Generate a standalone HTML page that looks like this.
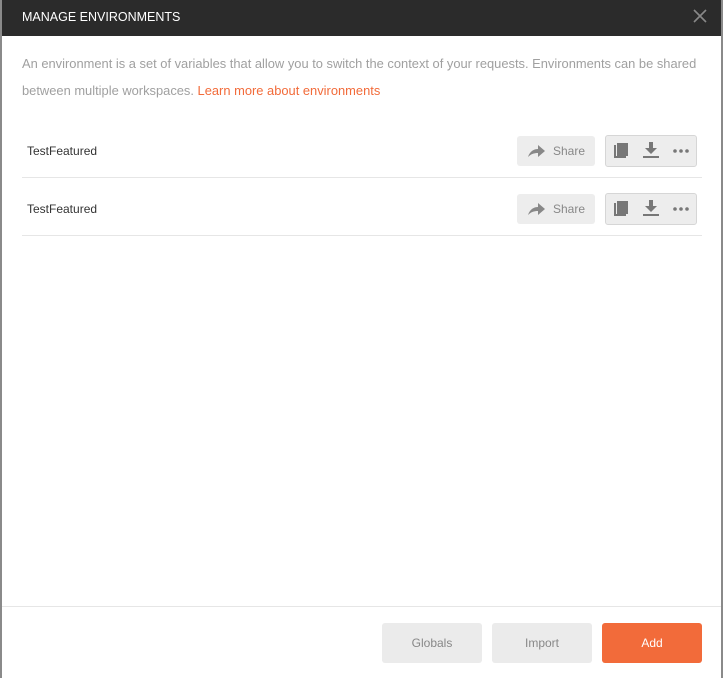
<!DOCTYPE html>
<html><head><style>
*{margin:0;padding:0;box-sizing:border-box}
body{width:723px;height:678px;overflow:hidden;background:#fff;font-family:"Liberation Sans",sans-serif;position:relative}
.ls{position:absolute;left:0;top:0;width:2px;height:678px;background:#8a8a8a}
.rs{position:absolute;right:0;top:0;width:2px;height:678px;background:#8a8a8a}
.hd{position:absolute;left:2px;top:0;right:2px;height:36px;background:#2b2b2b;color:#fff;font-size:12.5px;line-height:34px;padding-left:20px}
.x{position:absolute;right:14px;top:9px}
.desc{position:absolute;left:22px;top:50px;width:690px;font-size:12.9px;color:#a0a0a0;line-height:27px;white-space:nowrap}
.desc a{color:#f26b3a;text-decoration:none}
.row{position:absolute;left:22px;width:680px;height:58px;border-bottom:1px solid #e6e6e6}
.nm{position:absolute;left:5px;top:2px;line-height:58px;font-size:12px;color:#333}
.sh{position:absolute;left:495px;top:16px;width:78px;height:30px;background:#ededed;border-radius:3px;color:#888;font-size:12px;line-height:30px;padding-left:36px}
.sh svg{position:absolute;left:11px;top:9px}
.grp{position:absolute;left:583px;top:15px;width:92px;height:32px;background:#ededed;border:1px solid #d6d6d6;border-radius:3px}
.ft{position:absolute;left:2px;right:2px;top:606px;border-top:1px solid #e6e6e6}
.b{position:absolute;top:623px;width:100px;height:40px;border-radius:3px;font-size:12px;line-height:40px;text-align:center;background:#ebebeb;color:#888}
</style></head><body>
<div class="ls"></div><div class="rs"></div>
<div class="hd">MANAGE ENVIRONMENTS
<svg class="x" width="14" height="14" viewBox="0 0 14 14"><path d="M1 1L13 13M13 1L1 13" stroke="#888" stroke-width="1.6"/></svg></div>
<div class="desc">An environment is a set of variables that allow you to switch the context of your requests. Environments can be shared<br>between multiple workspaces. <a>Learn more about environments</a></div>
<div class="row" style="top:120px"><div class="nm">TestFeatured</div>
<div class="sh"><svg width="17" height="12" viewBox="0 0 17 12"><path d="M0 12C2 6 6 4 10 4V0L17 6L10 12V8C6 8 3 9 0 12Z" fill="#888"/></svg>Share</div>
<div class="grp"><svg width="92" height="30" viewBox="0 0 92 30"><path d="M8 9h2v11h10v2H8z" fill="#777"/><rect x="11" y="7" width="11" height="13" fill="#777"/><path d="M43 6h4v6h4l-6 6-6-6h4z" fill="#777"/><rect x="37" y="20" width="16" height="2" fill="#777"/><circle cx="69" cy="15" r="1.8" fill="#777"/><circle cx="75" cy="15" r="1.8" fill="#777"/><circle cx="81" cy="15" r="1.8" fill="#777"/></svg></div></div>
<div class="row" style="top:178px"><div class="nm">TestFeatured</div>
<div class="sh"><svg width="17" height="12" viewBox="0 0 17 12"><path d="M0 12C2 6 6 4 10 4V0L17 6L10 12V8C6 8 3 9 0 12Z" fill="#888"/></svg>Share</div>
<div class="grp"><svg width="92" height="30" viewBox="0 0 92 30"><path d="M8 9h2v11h10v2H8z" fill="#777"/><rect x="11" y="7" width="11" height="13" fill="#777"/><path d="M43 6h4v6h4l-6 6-6-6h4z" fill="#777"/><rect x="37" y="20" width="16" height="2" fill="#777"/><circle cx="69" cy="15" r="1.8" fill="#777"/><circle cx="75" cy="15" r="1.8" fill="#777"/><circle cx="81" cy="15" r="1.8" fill="#777"/></svg></div></div>
<div class="ft"></div>
<div class="b" style="left:382px">Globals</div>
<div class="b" style="left:492px">Import</div>
<div class="b" style="left:602px;background:#f26b3a;color:#fff">Add</div>
</body></html>
